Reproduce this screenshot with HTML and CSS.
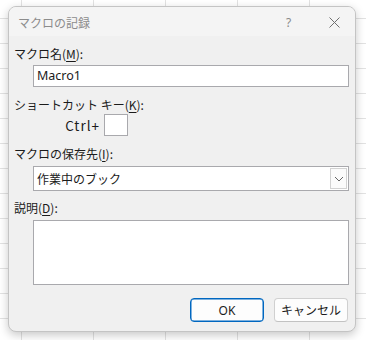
FILE: index.html
```html
<!DOCTYPE html>
<html lang="ja">
<head>
    <meta charset="UTF-8">
    <meta name="viewport" content="width=device-width, initial-scale=1.0">
    <title>マクロの記録</title>
    <link rel="stylesheet" href="styles.css">
</head>
<body>
    <div class="dialog">
        <div class="titlebar">
            <span class="title">マクロの記録</span>
            <span class="help">?</span>
            <span class="close">
                <svg width="11" height="11" viewBox="0 0 11 11">
                    <path d="M0.5 0.5 L10.5 10.5 M10.5 0.5 L0.5 10.5" stroke="#6f6f6f" stroke-width="1" fill="none"/>
                </svg>
            </span>
        </div>

        <div class="content">
            <div class="label label-name">マクロ名(<u>M</u>):</div>
            <div class="field field-name">Macro1</div>

            <div class="label label-key">ショートカット キー(<u>K</u>):</div>
            <div class="shortcut">
                <span class="ctrl">Ctrl+</span>
                <span class="keybox"></span>
            </div>

            <div class="label label-store">マクロの保存先(<u>I</u>):</div>
            <div class="field field-select">
                <span class="select-text">作業中のブック</span>
                <span class="dropbtn">
                    <svg width="10" height="6" viewBox="0 0 10 6">
                        <path d="M1 1 L5 5 L9 1" stroke="#666" stroke-width="1" fill="none"/>
                    </svg>
                </span>
            </div>

            <div class="label label-desc">説明(<u>D</u>):</div>
            <div class="field field-desc"></div>

            <div class="buttons">
                <button class="btn btn-primary">OK</button>
                <button class="btn">キャンセル</button>
            </div>
        </div>
    </div>
</body>
</html>
```

FILE: styles.css
```css
html, body {
    height: 100%;
}
body {
    margin: 0;
    padding: 6px 0 0 8px;
    box-sizing: border-box;
    font-family: "Noto Sans", "Noto Sans CJK JP", sans-serif;
    font-size: 12px;
    color: #1b1b1b;
    background-color: #ffffff;
    background-image:
        linear-gradient(to right, #e2e2e2 1px, transparent 1px),
        linear-gradient(to bottom, #e2e2e2 1px, transparent 1px);
    background-size: 72px 25px;
    background-position: 21px 18px;
}
.dialog {
    width: 348px;
    height: 326px;
    box-sizing: border-box;
    background-color: #f0f0f0;
    border: 1px solid #c4c4c4;
    border-radius: 8px;
    box-shadow: 0 3px 10px rgba(0,0,0,0.22);
    overflow: hidden;
}
.titlebar {
    height: 29px;
    background-color: #f4f4f4;
    display: flex;
    align-items: center;
    padding-left: 9px;
}
.title {
    flex: 1;
    color: #8c8c8c;
    font-family: "Noto Sans CJK JP", sans-serif;
    font-size: 12px;
    line-height: 16px;
    padding-top: 2px;
}
.help {
    color: #8a8a8a;
    font-size: 12px;
    width: 10px;
    margin-right: 33px;
    padding-top: 2px;
}
.close {
    display: flex;
    margin-right: 15px;
    padding-top: 2px;
}
.content {
    padding: 0 6px 0 5px;
}
.label {
    font-family: "Noto Sans CJK JP", sans-serif;
    line-height: 16px;
    height: 16px;
}
.label u {
    text-underline-offset: 2px;
}
.label-name {
    margin-top: 10px;
}
.label-key {
    margin-top: 10px;
}
.label-store {
    margin-top: 10px;
}
.label-desc {
    margin-top: 9px;
}
.field {
    margin-left: 19px;
    box-sizing: border-box;
    background-color: #ffffff;
    border: 1px solid #a9a9ad;
}
.field-name {
    margin-top: 3px;
    height: 22px;
    line-height: 20px;
    padding-left: 3px;
    font-size: 12.5px;
}
.shortcut {
    display: flex;
    align-items: center;
    margin-top: 1px;
}
.ctrl {
    width: 86px;
    text-align: right;
    margin-right: 4px;
    font-family: "Noto Sans CJK JP", sans-serif;
    font-size: 13.5px;
    letter-spacing: 1px;
}
.keybox {
    width: 24px;
    height: 22px;
    box-sizing: border-box;
    background-color: #ffffff;
    border: 1px solid #a9a9ad;
}
.field-select {
    margin-top: 4px;
    height: 25px;
    display: flex;
    align-items: center;
    padding: 0 1px 0 3px;
}
.select-text {
    flex: 1;
    font-family: "Noto Sans CJK JP", sans-serif;
}
.dropbtn {
    width: 17px;
    height: 21px;
    box-sizing: border-box;
    border: 1px solid #d2d2d2;
    background-color: #fbfbfb;
    display: flex;
    align-items: center;
    justify-content: center;
}
.field-desc {
    margin-top: 4px;
    height: 65px;
}
.buttons {
    display: flex;
    justify-content: flex-end;
    gap: 10px;
    margin-top: 13px;
    margin-right: 1px;
}
.btn {
    width: 74px;
    height: 24px;
    box-sizing: border-box;
    background-color: #fdfdfd;
    border: 1px solid #d0d0d0;
    border-bottom-color: #c2c2c2;
    border-radius: 4px;
    font-family: "Noto Sans", "Noto Sans CJK JP", sans-serif;
    font-size: 12px;
    color: #1b1b1b;
    padding: 0;
}
.btn-primary {
    border: 1px solid #0067c0;
    box-shadow: inset 0 0 0 0.5px #0067c0;
}
```
